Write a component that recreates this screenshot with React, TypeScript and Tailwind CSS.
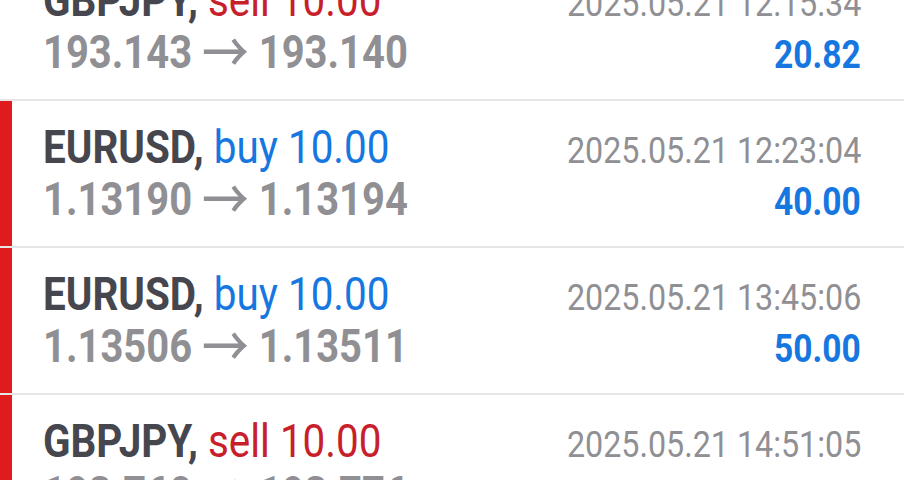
type Deal = {
  symbol: string;
  side: "buy" | "sell";
  volume: string;
  open: string;
  close: string;
  time: string;
  profit: string;
  marked: boolean;
};

const deals: Deal[] = [
  { symbol: "GBPJPY", side: "sell", volume: "10.00", open: "193.143", close: "193.140", time: "2025.05.21 12:15:34", profit: "20.82", marked: false },
  { symbol: "EURUSD", side: "buy", volume: "10.00", open: "1.13190", close: "1.13194", time: "2025.05.21 12:23:04", profit: "40.00", marked: true },
  { symbol: "EURUSD", side: "buy", volume: "10.00", open: "1.13506", close: "1.13511", time: "2025.05.21 13:45:06", profit: "50.00", marked: true },
  { symbol: "GBPJPY", side: "sell", volume: "10.00", open: "193.760", close: "193.776", time: "2025.05.21 14:51:05", profit: "-16.40", marked: true },
];

function Row({ d }: { d: Deal }) {
  const loss = d.profit.startsWith("-");
  return (
    <div className="flex h-[147px] border-b-2 border-[#e6e6e6]">
      <div className={d.marked ? "w-[12px] bg-[#e01b1f]" : "w-[12px] bg-white"} />
      <div className="flex flex-1 flex-col pl-[31px] pr-[43px] pt-[20px]">
        <div className="flex h-[52px] shrink-0 items-baseline justify-between">
          <span className="inline-block origin-left scale-x-[0.86] whitespace-nowrap text-[47px] leading-[52px]">
            <span className="font-bold text-[#46464e]">{d.symbol},</span>{" "}
            <span className={d.side === "buy" ? "text-[#1677e0]" : "text-[#c8202a]"}>
              {d.side} {d.volume}
            </span>
          </span>
          <span className="inline-block origin-right scale-x-[0.86] whitespace-nowrap text-[37.5px] leading-[52px] text-[#8f8f94]">
            {d.time}
          </span>
        </div>
        <div className="flex h-[52px] shrink-0 items-baseline justify-between">
          <span className="inline-block origin-left scale-x-[0.85] whitespace-nowrap text-[47px] font-bold leading-[52px] text-[#8f8f94]">
            {d.open}{" "}
            <span className="align-[-4px] font-['Noto_Sans_CJK_SC',sans-serif] text-[55px] font-medium leading-[0]">→</span>{" "}
            {d.close}
          </span>
          <span
            className={
              loss
                ? "inline-block origin-right scale-x-[0.86] whitespace-nowrap text-[39px] font-bold leading-[52px] text-[#c8202a]"
                : "inline-block origin-right scale-x-[0.86] whitespace-nowrap text-[39px] font-bold leading-[52px] text-[#1677e0]"
            }
          >
            {d.profit}
          </span>
        </div>
      </div>
    </div>
  );
}

export default function App() {
  return (
    <div className="h-[480px] w-[904px] overflow-hidden bg-white font-['Roboto',sans-serif]">
      <div className="-mt-[46px]">
        {deals.map((d, i) => (
          <Row key={i} d={d} />
        ))}
      </div>
    </div>
  );
}
